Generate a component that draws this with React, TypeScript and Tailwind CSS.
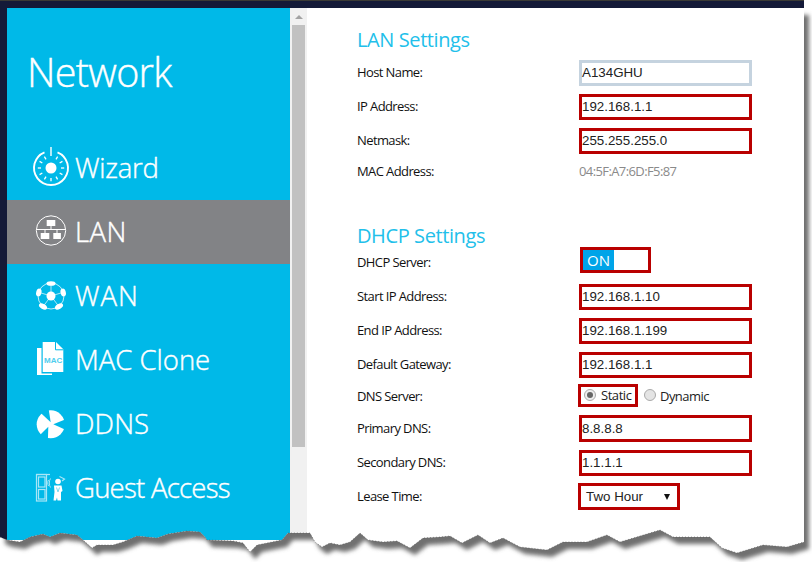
const edge: [number, number][] = [[0,537],[7,540],[20,542],[30,537],[43,534],[50,537],[60,533],[77,535],[83,540],[92,548],[97,545],[113,545],[123,542],[137,536],[157,538],[168,534],[187,531],[200,532],[205,537],[207,540],[233,541],[243,543],[250,552],[257,545],[282,540],[288,533],[310,533],[315,542],[322,547],[330,543],[340,545],[350,542],[360,533],[368,540],[383,542],[397,541],[410,548],[423,538],[440,537],[450,536],[462,543],[478,535],[490,543],[503,538],[520,547],[547,550],[563,542],[587,542],[607,535],[620,542],[660,530],[673,537],[710,537],[722,548],[737,553],[763,545],[787,547],[804,542]];
const edgeStr = edge.map((p) => p.join(",")).join(" ");
const outside = `${edgeStr} 804,0 812,0 812,562 0,562`;
const windowShape = `0,8 804,8 ${[...edge].reverse().map((p) => p.join(",")).join(" ")}`;

function TornEdge() {
  return (
    <svg className="absolute left-0 top-0 pointer-events-none" width="812" height="562" viewBox="0 0 812 562">
      <defs>
        <clipPath id="out"><polygon points={outside} /></clipPath>
        <filter id="bl" x="-5%" y="-5%" width="110%" height="110%"><feGaussianBlur stdDeviation="2.2" /></filter>
      </defs>
      <polygon points={outside} fill="#ffffff" />
      <g clipPath="url(#out)">
        <polygon points={windowShape} transform="translate(5 7)" fill="#707070" filter="url(#bl)" />
      </g>
      <polyline points={edgeStr} fill="none" stroke="#555" strokeWidth="0.6" strokeDasharray="1 2" />
    </svg>
  );
}

const ico = "shrink-0 w-[44px] h-[44px]";
const WizardIcon = () => (
  <svg className={ico} viewBox="0 0 44 44" fill="none" stroke="#fff">
    <path d="M15.5 6.3A17 17 0 1 0 28.5 6.3" strokeWidth="1.9" />
    <path d="M22 1V10" strokeWidth="1.4" />
    <circle cx="22" cy="22" r="5.5" fill="#fff" stroke="none" />
    {[30, 60, 90, 120, 150, 180, 210, 240, 270, 300, 330].map((a) => (
      <line key={a} x1="22" y1="12" x2="22" y2="8.8" strokeWidth="1.3" transform={`rotate(${a} 22 22)`} />
    ))}
  </svg>
);
const LanIcon = () => (
  <svg className={ico} viewBox="0 0 44 44" fill="none" stroke="#fff">
    <circle cx="22" cy="20.5" r="14.7" strokeWidth="1" />
    <path d="M7.5 19.5H36.5M22 16V19.5M16 19.5V23M28 19.5V23" strokeWidth="1" />
    <rect x="17.7" y="10" width="8.6" height="6" fill="#fff" stroke="none" />
    <rect x="11.7" y="23" width="8.6" height="6" fill="#fff" stroke="none" />
    <rect x="24.3" y="23" width="7.6" height="6" fill="#fff" stroke="none" />
  </svg>
);
const WanIcon = () => (
  <svg className={ico} viewBox="0 0 44 44" fill="none" stroke="#fff">
    <circle cx="22" cy="22" r="13" strokeWidth="1" opacity="0.75" />
    <path d="M22 22V10M22 22L10.5 18.5M22 22L33.5 18.5M22 22L14.5 32M22 22L29.5 32" strokeWidth="0.9" opacity="0.75" />
    <circle cx="22" cy="22" r="4.5" fill="#fff" stroke="none" />
    <g fill="#fff" stroke="none">
      <ellipse cx="22" cy="9.5" rx="4.5" ry="2.3" />
      <ellipse cx="9.8" cy="18.5" rx="2.6" ry="4" transform="rotate(15 9.8 18.5)" />
      <ellipse cx="34.2" cy="18.5" rx="2.6" ry="4" transform="rotate(-15 34.2 18.5)" />
      <ellipse cx="14" cy="32.5" rx="4.4" ry="2.5" transform="rotate(30 14 32.5)" />
      <ellipse cx="30" cy="32.5" rx="4.4" ry="2.5" transform="rotate(-30 30 32.5)" />
    </g>
  </svg>
);
const MacIcon = () => (
  <svg className={ico} viewBox="0 0 44 44">
    <path d="M8 10H12.5V35.5H23V37H8Z" fill="#fff" />
    <path d="M13.7 4H27L34.3 11.3V34H13.7Z" fill="#fff" />
    <path d="M26.5 4V11.8H34.3" fill="none" stroke="#00b9e8" strokeWidth="1" />
    <text x="24.2" y="25" textAnchor="middle" fontSize="8" fontWeight="700" fill="#4fcdee" fontFamily="'Liberation Sans',sans-serif">MAC</text>
  </svg>
);
const DdnsIcon = () => (
  <svg className={ico} viewBox="0 0 44 44">
    <circle cx="21.7" cy="22.3" r="14" fill="#fff" />
    <g fill="#00b9e8">
      <polygon points="21.7,20.3 11,10.3 19.5,6" />
      <polygon points="24.3,22.3 38,16.8 37.5,28.3" />
      <polygon points="19.3,24.7 11,33 18.9,38" />
    </g>
  </svg>
);
const GuestIcon = () => (
  <svg className={ico} viewBox="0 0 44 44" fill="none">
    <g stroke="#a8e6f7" strokeWidth="1.2">
      <rect x="7.5" y="8.5" width="10" height="26.5" />
      <rect x="9.5" y="11" width="6.5" height="10" />
      <rect x="9.5" y="23.5" width="6.5" height="9.5" />
      <path d="M7 8.5H21" />
      <path d="M19.5 14c-1 1.5-1 4 0 6M21.5 12.5c-1.6 2.5-1.6 6.5 0 9" strokeWidth="1" />
    </g>
    <circle cx="29" cy="15.5" r="2.8" fill="#fff" />
    <path d="M25 19.5H32.5L33.5 25L32 26V34.5H28.5L28 31.5L27 34.5H24.5L25.5 26Z" fill="#fff" />
    <path d="M30.5 10.5L35.5 13L33 15" stroke="#a8e6f7" strokeWidth="1.2" />
    <path d="M27.5 21.5L29 26L30.5 21.5" stroke="#7fd8f0" strokeWidth="1" />
  </svg>
);

const nav = [
  { label: "Wizard", Icon: WizardIcon, tr: "tracking-[-0.25px]" },
  { label: "LAN", Icon: LanIcon, active: true, tr: "tracking-[0.4px]" },
  { label: "WAN", Icon: WanIcon, tr: "tracking-[1px]" },
  { label: "MAC Clone", Icon: MacIcon, tr: "tracking-[0px]" },
  { label: "DDNS", Icon: DdnsIcon, tr: "tracking-[0.15px]" },
  { label: "Guest Access", Icon: GuestIcon, tr: "tracking-[-0.75px]" },
];

function Sidebar() {
  return (
    <aside className="w-[283px] h-[532px] shrink-0 bg-[#00b9e8] text-white font-['Open_Sans',sans-serif]">
      <div className="h-[128px] pl-[20px] pt-[33px] text-[39.5px] leading-[62px] font-light tracking-[-0.7px] [-webkit-text-stroke:0.4px_#fff]">Network</div>
      {nav.map(({ label, Icon, active, tr }) => (
        <div key={label} className={`h-16 flex items-center pl-[22px] gap-[3px] font-light text-[27.5px] [-webkit-text-stroke:0.4px_#fff] ${tr} ${active ? "bg-[#828386]" : ""}`}>
          <Icon />
          <span className="-ml-[1px]">{label}</span>
        </div>
      ))}
    </aside>
  );
}

function Scrollbar() {
  return (
    <div className="w-[17px] shrink-0 bg-[#f1f1f1] flex flex-col items-center">
      <div className="h-[17px] w-full flex items-center justify-center">
        <div className="w-0 h-0 border-l-[4px] border-r-[4px] border-b-[4px] border-l-transparent border-r-transparent border-b-[#a3a3a3]" />
      </div>
      <div className="w-[13px] h-[422px] bg-[#c1c1c1]" />
    </div>
  );
}

const labelCls = "w-[222px] shrink-0 text-[13px] tracking-[-0.6px] text-[#111] font-['Open_Sans',sans-serif]";

function Field({ label, value, host, cls = "" }: { label: string; value: string; host?: boolean; cls?: string }) {
  return (
    <div className={`flex items-center ${cls}`}>
      <div className={labelCls}>{label}</div>
      <div className={`w-[173px] h-full border-[3px] flex items-center bg-white text-[13.33px] text-[#222] font-['Liberation_Sans',sans-serif] ${host ? "border-[#c5d3df]" : "border-[#b90000]"}`}>{value}</div>
    </div>
  );
}

const Heading = ({ children, cls }: { children: string; cls: string }) => (
  <div className={`text-[20px] tracking-[-0.4px] font-['Open_Sans',sans-serif] text-[#22bfea] leading-none ${cls}`}>{children}</div>
);

function Content() {
  return (
    <main className="flex-1 pl-[50px] pt-[22px]">
      <Heading cls="h-[30px]">LAN Settings</Heading>
      <Field label="Host Name:" value="A134GHU" host cls="h-[26px] mb-2" />
      <Field label="IP Address:" value="192.168.1.1" cls="h-[26px] mb-2" />
      <Field label="Netmask:" value="255.255.255.0" cls="h-[26px] mb-2" />
      <div className="flex items-center h-[18px] pt-[1px]">
        <div className={labelCls}>MAC Address:</div>
        <div className="text-[13px] tracking-[-0.6px] text-[#8a8a8a] font-['Open_Sans',sans-serif]">04:5F:A7:6D:F5:87</div>
      </div>
      <Heading cls="mt-[46px] h-[21px]">DHCP Settings</Heading>
      <div className="flex items-center h-[26px] mb-[11px]">
        <div className={`${labelCls} pt-[5px]`}>DHCP Server:</div>
        <div className="ml-[1px] w-[71px] h-full border-[3px] border-[#b90000] bg-white flex">
          <div className="w-[31px] bg-[#00a4e8] text-white text-[15px] flex items-center justify-center font-['Open_Sans',sans-serif]">ON</div>
        </div>
      </div>
      <Field label="Start IP Address:" value="192.168.1.10" cls="h-[26px] mb-2" />
      <Field label="End IP Address:" value="192.168.1.199" cls="h-[26px] mb-2" />
      <Field label="Default Gateway:" value="192.168.1.1" cls="h-[26px] mb-[6px]" />
      <div className="flex items-center h-[23px] mb-2">
        <div className={`${labelCls} pt-[3px]`}>DNS Server:</div>
        <div className="-ml-[1px] w-[60px] h-full border-[3px] border-[#b90000] flex items-center pl-[3px] gap-[5px]">
          <div className="w-[12px] h-[12px] rounded-full border border-[#aaa] bg-[#eee] flex items-center justify-center -mt-[2px]">
            <div className="w-[6px] h-[6px] rounded-full bg-[#666]" />
          </div>
          <span className="pt-[1px] text-[13px] tracking-[-0.45px] font-['Open_Sans',sans-serif] text-[#222]">Static</span>
        </div>
        <div className="ml-[6px] w-[12px] h-[12px] rounded-full border border-[#aaa] bg-[#e4e4e4] -mt-[2px]" />
        <span className="ml-[4px] pt-[3px] text-[13px] tracking-[-0.55px] font-['Open_Sans',sans-serif] text-[#222]">Dynamic</span>
      </div>
      <Field label="Primary DNS:" value="8.8.8.8" cls="h-[27px] mb-2" />
      <Field label="Secondary DNS:" value="1.1.1.1" cls="h-[26px] mb-[7px]" />
      <div className="flex items-center h-[27px]">
        <div className={labelCls}>Lease Time:</div>
        <div className="-ml-[1px] w-[102px] h-full border-[3px] border-[#b90000] bg-white flex items-center pl-[5px] text-[13.33px] text-[#222] font-['Liberation_Sans',sans-serif]">
          Two Hour
          <div className="ml-[21px] w-0 h-0 border-l-[3px] border-r-[3px] border-t-[6px] border-l-transparent border-r-transparent border-t-[#111]" />
        </div>
      </div>
    </main>
  );
}

export default function App() {
  return (
    <div className="relative w-[812px] h-[562px] bg-white overflow-hidden">
      <div className="w-[804px] h-[562px] bg-[#141a38] border-t border-[#3a3a35] pt-[7px] pl-[7px]">
        <div className="flex h-full bg-white">
          <Sidebar />
          <Scrollbar />
          <Content />
        </div>
      </div>
      <TornEdge />
    </div>
  );
}
